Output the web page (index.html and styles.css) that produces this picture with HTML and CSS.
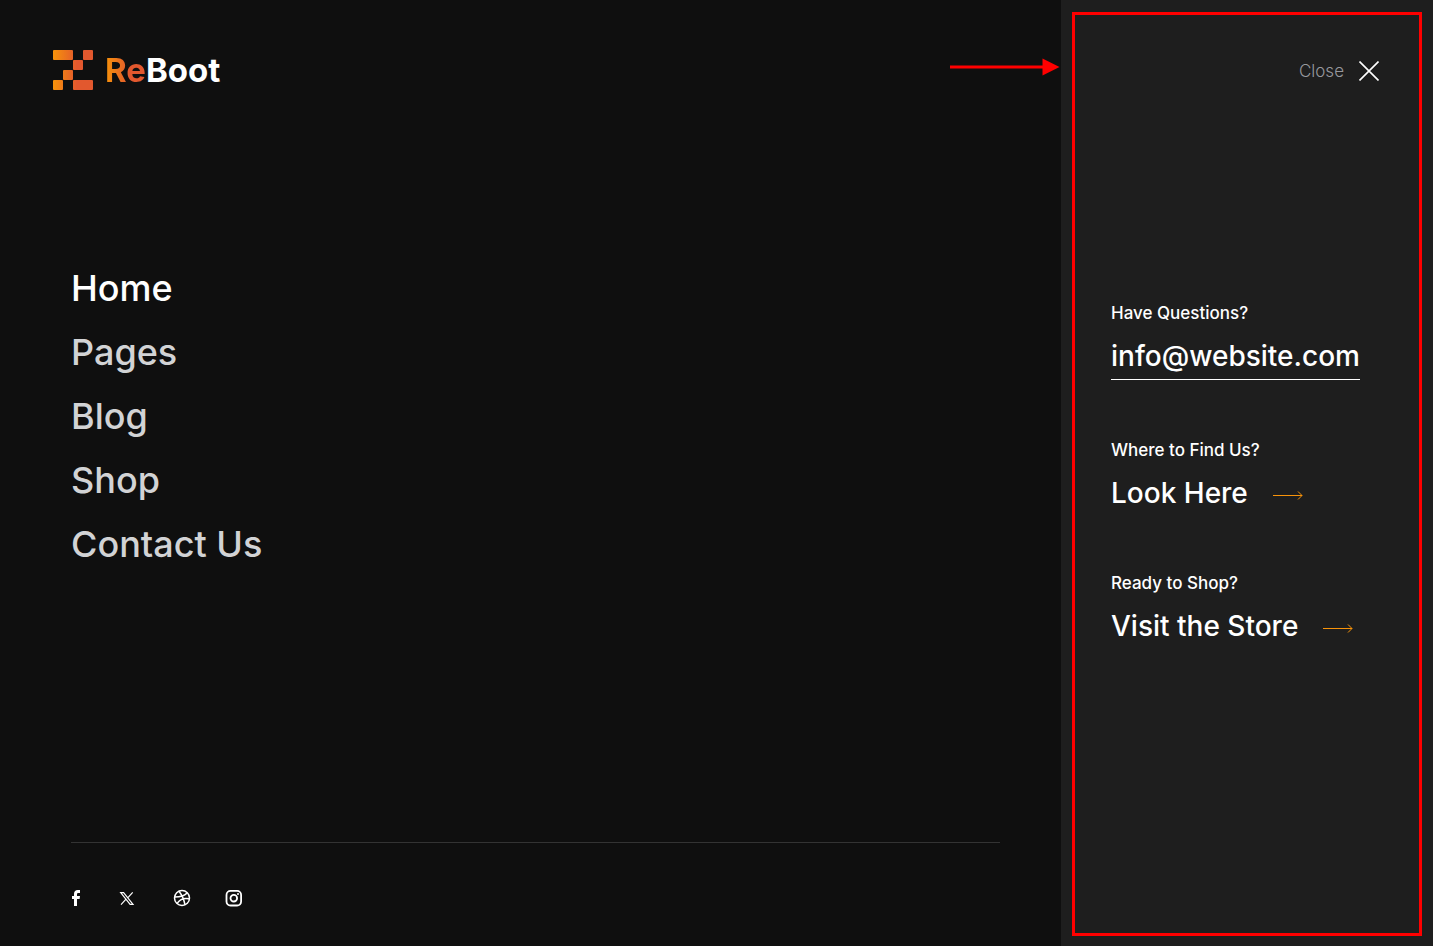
FILE: index.html
```html
<!DOCTYPE html>
<html lang="en">
    <head>
        <meta charset="UTF-8" />
        <title>ReBoot</title>
        <meta name="viewport" content="width=device-width, initial-scale=1.0" />
        <link rel="stylesheet" href="styles.css">
    </head>

    <body>
        <div class="menu">
            <main class="menu-main">
                <a class="logo" href="#">
                    <svg class="logo-mark" width="40" height="40" viewBox="0 0 40 40" aria-hidden="true">
                        <defs>
                            <linearGradient id="mark" gradientUnits="userSpaceOnUse" x1="0" y1="0" x2="24" y2="0">
                                <stop offset="0" stop-color="#f7930a" />
                                <stop offset="1" stop-color="#e2582e" />
                            </linearGradient>
                        </defs>
                        <g fill="url(#mark)">
                            <rect x="0" y="0" width="20" height="10" rx="1" />
                            <rect x="30" y="0" width="10" height="10" rx="1" />
                            <rect x="20" y="10" width="10" height="10" rx="1" />
                            <rect x="10" y="20" width="10" height="10" rx="1" />
                            <rect x="0" y="30" width="10" height="10" rx="1" />
                            <rect x="20" y="30" width="20" height="10" rx="1" />
                        </g>
                    </svg>
                    <span class="logo-text"><span class="logo-accent">Re</span>Boot</span>
                </a>

                <nav class="nav">
                    <ul>
                        <li><a class="active" href="#">Home</a></li>
                        <li><a href="#">Pages</a></li>
                        <li><a href="#">Blog</a></li>
                        <li><a href="#">Shop</a></li>
                        <li><a href="#">Contact Us</a></li>
                    </ul>
                </nav>

                <footer class="socials">
                    <a href="#" aria-label="Facebook">
                        <svg width="14" height="18" viewBox="0 0 14 18"><path fill="#fff" d="M3 17V10H1V7H3V5C3 2.300 4.500 1 6.800 1H9V4H7.500C6.500 4 6 4.400 6 5.300V7H9L8.600 10H6V17Z" /></svg>
                    </a>
                    <a href="#" aria-label="X">
                        <svg width="20" height="18" viewBox="0 0 20 18"><path fill="none" stroke="#fff" stroke-width="1.200" d="M1.700 3.600H4.600L14 15.400H11.100ZM13.700 3.300L8.700 8.800M7 10.200L2 15.700" /></svg>
                    </a>
                    <a href="#" aria-label="Dribbble">
                        <svg width="18" height="18" viewBox="0 0 18 18"><g fill="none" stroke="#fff" stroke-width="1.500"><circle cx="9" cy="9" r="7.500" /><path d="M6 2.200C9 6 11 10.500 12 15.800M1.600 8C6 8 11.500 7 14.300 3.700M4 14.700C6.500 10.300 11 8.600 16.400 9.800" /></g></svg>
                    </a>
                    <a href="#" aria-label="Instagram">
                        <svg width="18" height="18" viewBox="0 0 18 18"><g fill="none" stroke="#fff"><rect x="1.500" y="1.900" width="14.600" height="14.600" rx="4" stroke-width="1.800" /><circle cx="8.800" cy="9.200" r="3.300" stroke-width="1.800" /></g><circle cx="13" cy="5" r="1" fill="#fff" /></svg>
                    </a>
                </footer>

                <svg class="pointer" width="110" height="18" viewBox="0 0 110 18" aria-hidden="true">
                    <path d="M0 9H94" stroke="#f00" stroke-width="3" />
                    <path d="M92.500 0.500L109.500 9L92.500 17.500Z" fill="#f00" />
                </svg>
            </main>

            <aside class="side">
                <div class="side-frame">
                    <button class="close" type="button">
                        Close
                        <svg width="20" height="20" viewBox="0 0 20 20" aria-hidden="true"><path d="M0.500 0.500L19.500 19.500M19.500 0.500L0.500 19.500" stroke="#fff" stroke-width="1.600" /></svg>
                    </button>

                    <section class="info">
                        <h6>Have Questions?</h6>
                        <a class="info-link info-mail" href="mailto:info@website.com">info@website.com</a>
                    </section>
                    <section class="info">
                        <h6>Where to Find Us?</h6>
                        <a class="info-link" href="#">Look Here
                            <svg class="arrow" width="30" height="10" viewBox="0 0 30 10" aria-hidden="true"><path fill="none" stroke="#f7930a" d="M0 5.500H29M25 1.500L29 5.500L25 9.500" /></svg>
                        </a>
                    </section>
                    <section class="info">
                        <h6>Ready to Shop?</h6>
                        <a class="info-link" href="#">Visit the Store
                            <svg class="arrow" width="30" height="10" viewBox="0 0 30 10" aria-hidden="true"><path fill="none" stroke="#f7930a" d="M0 5.500H29M25 1.500L29 5.500L25 9.500" /></svg>
                        </a>
                    </section>
                </div>
            </aside>
        </div>
    </body>
</html>
```
FILE: styles.css
```css
* {
    box-sizing: border-box;
}

body {
    margin: 0;
    background: #0f0f0f;
    color: #fff;
    font-family: Inter, "Liberation Sans", sans-serif;
}

a {
    color: inherit;
    text-decoration: none;
}

svg {
    display: block;
    flex: none;
}

.menu {
    display: flex;
    min-height: 100vh;
}

.menu-main {
    position: relative;
    flex: 1;
    display: flex;
    flex-direction: column;
    padding: 50px 61px 39px 71px;
}

.logo {
    display: flex;
    align-items: center;
    gap: 12px;
    height: 40px;
    margin-left: -18px;
}

.logo-text {
    font-size: 33px;
    font-weight: 700;
    line-height: 40px;
}

.logo-accent {
    background: linear-gradient(90deg, #f7930a, #e2582e 60%);
    background-clip: text;
    -webkit-background-clip: text;
    color: transparent;
}

.nav {
    flex: 1;
    margin-top: 166px;
}

.nav ul {
    margin: 0;
    padding: 0;
    list-style: none;
}

.nav li {
    font-size: 36px;
    font-weight: 500;
    line-height: 64px;
    color: #d2d3d5;
}

.nav .active {
    color: #fff;
}

.socials {
    display: flex;
    align-items: center;
    gap: 34px;
    border-top: 1px solid #333;
    padding-top: 46px;
}

/* arrow lies over the page, pointing at the side panel */
.pointer {
    position: absolute;
    top: 58px;
    right: 1px;
}

.side {
    display: flex;
    width: 372px;
    padding: 12px 11px 10px;
    background: #1e1e1e;
}

.side-frame {
    flex: 1;
    border: 3px solid #f00;
    padding: 40px 36px;
}

.close {
    display: flex;
    align-items: center;
    gap: 15px;
    margin: 0 4px 214px auto;
    padding: 0;
    border: 0;
    background: none;
    color: #97989d;
    font-family: inherit;
    font-size: 17px;
    font-weight: 300;
    line-height: 32px;
}

.info {
    margin-bottom: 58px;
}

.info h6 {
    margin: 0 0 11px;
    font-size: 17px;
    font-weight: 500;
    line-height: 24px;
}

.info-link {
    display: flex;
    align-items: center;
    gap: 25px;
    font-size: 28px;
    font-weight: 500;
    line-height: 40px;
}

.info-mail {
    width: fit-content;
    padding-bottom: 3px;
    border-bottom: 1px solid #fff;
}

.arrow {
    margin-top: 4px;
}
```
